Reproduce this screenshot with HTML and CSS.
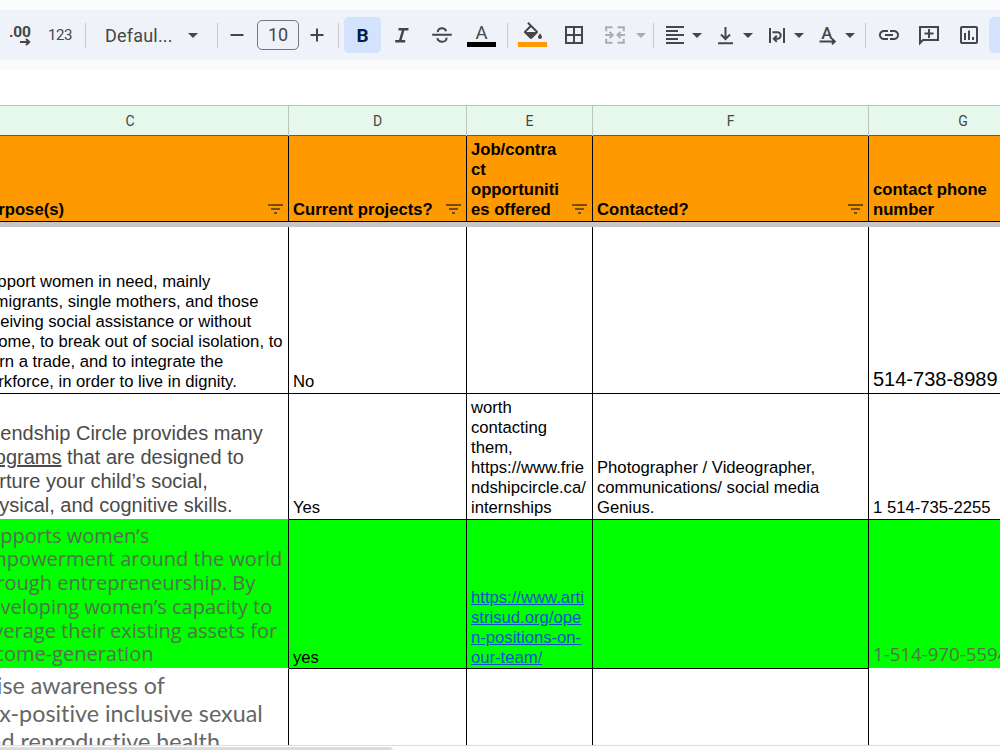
FILE: index.html
```html
<!DOCTYPE html>
<html lang="en">
<head>
    <meta charset="UTF-8">
    <meta name="viewport" content="width=device-width, initial-scale=1.0">
    <title>Organizations - Sheet</title>
    <link rel="stylesheet" href="styles.css">
</head>
<body>

    <div class="toolbar">
        <div class="tool decimals">
            <svg width="24" height="24" viewBox="0 0 24 24">
                <text class="decimal-text" x="1" y="13.5" textLength="22">.00</text>
                <path class="line" d="M12 19h9M18 16l3.2 3-3.2 3"/>
            </svg>
        </div>
        <div class="tool number-format">123</div>
        <div class="separator"></div>
        <div class="font-select"><span>Defaul...</span><i class="caret"></i></div>
        <div class="separator"></div>
        <div class="tool size-step"><svg width="24" height="24" viewBox="0 0 24 24"><path class="line" d="M5.5 12h13"/></svg></div>
        <div class="font-size">10</div>
        <div class="tool size-step"><svg width="24" height="24" viewBox="0 0 24 24"><path class="line" d="M5.5 12h13M12 5.5v13"/></svg></div>
        <div class="separator after-size"></div>
        <div class="tool bold">B</div>
        <div class="tool italic"><svg width="24" height="24" viewBox="0 0 24 24"><path class="thick" d="M8.5 6.2h10M5.2 18.3h10M13.5 6.2l-3.5 12"/></svg></div>
        <div class="tool strike">
            <svg width="24" height="24" viewBox="0 0 24 24">
                <path class="line" d="M2.2 11.8h19.6M7.8 9.2C7.6 6.6 9.5 5.3 12 5.3c2.1 0 3.6 1 4.1 2.9M7.4 15.2c.4 2.3 2.1 3.600 4.7 3.600 2.900 0 4.600-1.700 4.400-4.100"/>
            </svg>
        </div>
        <div class="tool text-color"><span>A</span><i class="swatch black"></i></div>
        <div class="separator"></div>
        <div class="tool fill-color">
            <svg width="24" height="24" viewBox="0 0 24 24">
                <path class="solid" d="M16.560 8.940L7.620 0 6.210 1.410l2.380 2.380-5.150 5.150c-.59.59-.59 1.540 0 2.120l5.500 5.500c.29.290.68.440 1.060.44s.77-.15 1.060-.44l5.500-5.500c.59-.58.59-1.530 0-2.120zM5.210 10L10 5.210 14.790 10zM19 11.500s-2 2.170-2 3.500c0 1.100.9 2 2 2s2-.9 2-2c0-1.330-2-3.500-2-3.500z"/>
            </svg>
            <i class="swatch orange"></i>
        </div>
        <div class="tool borders"><svg width="24" height="24" viewBox="0 0 24 24"><path class="line" d="M4 4h16v16H4zM12 4v16M4 12h16"/></svg></div>
        <div class="tool merge disabled">
            <svg width="24" height="24" viewBox="0 0 24 24">
                <path class="line" d="M9.500 4.200H3.200v4M14.500 4.200h6.300v4M9.500 19.800H3.200v-4M14.500 19.800h6.300v-4M2.200 12h7M22 12h-7M6.600 8.900L9.700 12l-3.100 3.100M17.600 8.900L14.500 12l3.100 3.100"/>
            </svg>
        </div>
        <div class="drop disabled"><i class="caret"></i></div>
        <div class="separator"></div>
        <div class="tool align"><svg width="24" height="24" viewBox="0 0 24 24"><path class="line" d="M3 4h18M3 8h12M3 12h18M3 16h12M3 20h18"/></svg></div>
        <div class="drop"><i class="caret"></i></div>
        <div class="tool with-drop"><svg width="24" height="24" viewBox="0 0 24 24"><path class="line" d="M12.500 4v11.500M8 11.500l4.500 4.500 4.500-4.500M5 20.300h15"/></svg></div>
        <div class="drop"><i class="caret"></i></div>
        <div class="tool with-drop"><svg width="24" height="24" viewBox="0 0 24 24"><path class="line" d="M6 5v15M20 5v15M8.500 9.300h5a3.200 3.200 0 0 1 0 6.400h-3.500M12.800 12.700l-3 3 3 3"/></svg></div>
        <div class="drop"><i class="caret"></i></div>
        <div class="tool with-drop">
            <svg width="24" height="24" viewBox="0 0 24 24">
                <text class="rotate-text" x="12" y="15.500" text-anchor="middle">A</text>
                <path class="line" d="M4.500 18.500h15M17 15.700l2.800 2.800-2.800 2.800"/>
            </svg>
        </div>
        <div class="drop"><i class="caret"></i></div>
        <div class="separator before-link"></div>
        <div class="tool link">
            <svg width="24" height="24" viewBox="0 0 24 24">
                <path class="solid" d="M3.900 12c0-1.710 1.390-3.100 3.100-3.100h4V7H7c-2.760 0-5 2.240-5 5s2.240 5 5 5h4v-1.900H7c-1.710 0-3.100-1.390-3.100-3.100zM8 13h8v-2H8v2zm9-6h-4v1.900h4c1.710 0 3.100 1.390 3.100 3.100s-1.390 3.100-3.100 3.100h-4V17h4c2.760 0 5-2.240 5-5s-2.240-5-5-5z"/>
            </svg>
        </div>
        <div class="tool comment"><svg width="24" height="24" viewBox="0 0 24 24"><path class="line" d="M3 20V4h18v13H6zM12 6v9M7.500 10.500h9"/></svg></div>
        <div class="tool chart"><svg width="24" height="24" viewBox="0 0 24 24"><rect class="line" x="4" y="4" width="16" height="16" rx="1"/><path class="line" d="M8 10v7M12 7.500V17M16 14v3"/></svg></div>
        <div class="tool filter-on"></div>
    </div>

    <div class="sheet">
        <div class="row letters">
            <div class="letter">C</div>
            <div class="letter">D</div>
            <div class="letter">E</div>
            <div class="letter">F</div>
            <div class="letter">G</div>
        </div>

        <div class="row titles">
            <div class="cell">Purpose(s)<svg class="filter" width="15" height="10"><path d="M0 1h15M3 5h9M6 9h3"/></svg></div>
            <div class="cell">Current projects?<svg class="filter" width="15" height="10"><path d="M0 1h15M3 5h9M6 9h3"/></svg></div>
            <div class="cell">Job/contra<br>ct<br>opportuniti<br>es offered<svg class="filter" width="15" height="10"><path d="M0 1h15M3 5h9M6 9h3"/></svg></div>
            <div class="cell">Contacted?<svg class="filter" width="15" height="10"><path d="M0 1h15M3 5h9M6 9h3"/></svg></div>
            <div class="cell">contact phone<br>number</div>
        </div>
        <div class="freeze-bar"></div>

        <div class="row row-support">
            <div class="cell">Support women in need, mainly<br>immigrants, single mothers, and those<br>receiving social assistance or without<br>income, to break out of social isolation, to<br>learn a trade, and to integrate the<br>workforce, in order to live in dignity.</div>
            <div class="cell">No</div>
            <div class="cell"></div>
            <div class="cell"></div>
            <div class="cell large">514-738-8989</div>
        </div>

        <div class="row row-friendship">
            <div class="cell large grey green-line">Friendship Circle provides many<br><u>programs</u> that are designed to<br>nurture your child’s social,<br>physical, and cognitive skills.</div>
            <div class="cell">Yes</div>
            <div class="cell">worth<br>contacting<br>them,<br>https://www.frie<br>ndshipcircle.ca/<br>internships</div>
            <div class="cell">Photographer / Videographer,<br>communications/ social media<br>Genius.</div>
            <div class="cell">1 514-735-2255</div>
        </div>

        <div class="row row-artistri">
            <div class="cell open-sans white-line">Supports women’s<br>empowerment around the world<br>through entrepreneurship. By<br>developing women’s capacity to<br>leverage their existing assets for<br>income-generation</div>
            <div class="cell">yes</div>
            <div class="cell"><a href="#">https://www.arti<br>strisud.org/ope<br>n-positions-on-<br>our-team/</a></div>
            <div class="cell"></div>
            <div class="cell open-sans phone white-line">1-514-970-5594</div>
        </div>

        <div class="row row-awareness">
            <div class="cell lato">raise awareness of<br>sex-positive inclusive sexual<br>and reproductive health</div>
            <div class="cell"></div>
            <div class="cell"></div>
            <div class="cell"></div>
            <div class="cell"></div>
        </div>
    </div>

    <div class="scrollbar"><div class="thumb"></div></div>

</body>
</html>
```
FILE: styles.css
```css
* {
    box-sizing: border-box;
}

body {
    margin: 0;
    width: 1000px;
    height: 750px;
    overflow: hidden;
    background: #ffffff;
    color: #000000;
    font-family: "Liberation Sans", Arial, sans-serif;
}

/* toolbar */
.toolbar {
    display: flex;
    align-items: center;
    height: 70px;
    background: #eff2f9;
    border-top: 10px solid #f9fbfd;
    border-bottom: 10px solid #f9fbfd;
    overflow: hidden;
    font-family: Roboto, sans-serif;
    color: #444746;
}

.tool {
    position: relative;
    display: flex;
    flex: none;
    align-items: center;
    justify-content: center;
    width: 40px;
    height: 36px;
}

.separator {
    flex: none;
    width: 1px;
    height: 25px;
    margin: 0 5px;
    background: #c7c9cc;
}

.line {
    fill: none;
    stroke: #444746;
    stroke-width: 2;
}

.thick {
    fill: none;
    stroke: #444746;
    stroke-width: 2.5;
}

.solid {
    fill: #444746;
}

.decimal-text {
    font-size: 15.5px;
    font-weight: 700;
    fill: #444746;
}

.rotate-text {
    font-size: 17px;
    font-weight: 500;
    fill: #444746;
}

.number-format {
    font-size: 15px;
    letter-spacing: -0.5px;
}

.font-select {
    display: flex;
    flex: none;
    align-items: center;
    justify-content: space-between;
    width: 121px;
    padding: 0 14px;
    font-size: 18px;
    letter-spacing: 0.2px;
}

.caret {
    border: 5px solid transparent;
    border-top-color: #444746;
    border-bottom: 0;
}

.drop {
    display: flex;
    flex: none;
    justify-content: center;
    width: 13px;
    padding-right: 2px;
}

.disabled {
    opacity: 0.4;
}

.size-step {
    width: 28px;
}

.font-size {
    flex: none;
    width: 42px;
    height: 30px;
    margin: 0 4px 0 6px;
    border: 1px solid #747775;
    border-radius: 5px;
    font-size: 18px;
    line-height: 28px;
    text-align: center;
}

.after-size {
    margin-left: 7px;
}

.bold {
    width: 37px;
    border-radius: 5px;
    background: #d3e3fd;
    color: #041e49;
    font-size: 19px;
    font-weight: 700;
}

.italic {
    width: 38px;
    margin-left: 2px;
}

.strike {
    width: 41px;
}

.text-color span {
    margin: -4px 1px 0 0;
    font-size: 18.5px;
}

.swatch {
    position: absolute;
    bottom: 6px;
    left: 5px;
    width: 29px;
    height: 5px;
}

.black {
    background: #000000;
}

.orange {
    background: #ff9900;
}

.fill-color {
    width: 39px;
}

.fill-color svg {
    margin-top: -3px;
}

.borders {
    width: 43px;
}

.align {
    width: 32px;
}

.with-drop {
    width: 34px;
    margin-left: 4px;
}

.before-link {
    margin-left: 8px;
}

.link {
    width: 36px;
}

.comment {
    width: 43px;
}

.chart {
    width: 37px;
}

.filter-on {
    margin-left: 2px;
    border-radius: 5px;
    background: #d3e3fd;
}

/* grid */
.sheet {
    height: 641px;
    margin: 35px 0 0 -28px;
    overflow: hidden;
    border-bottom: 1px solid #dadce0;
}

.row {
    display: grid;
    grid-template-columns: 317px 178px 126px 276px 189px;
}

.letters {
    height: 31px;
    border-top: 1px solid #b7bfba;
    border-bottom: 1px solid #2d7a3e;
    background: #e6f7eb;
}

.letter {
    border-right: 1px solid #bcc4bf;
    color: #444746;
    font-family: Roboto, sans-serif;
    font-size: 14px;
    line-height: 30px;
    text-align: center;
}

.cell {
    position: relative;
    display: flow-root;
    align-content: end;
    padding: 0 0 1px 4px;
    border-right: 1px solid #000000;
    border-bottom: 1px solid #000000;
    font-size: 16.67px;
    line-height: 20px;
    white-space: nowrap;
    overflow: hidden;
}

.cell:first-child {
    padding-left: 5px;
}

.titles {
    height: 86px;
    background: #ff9900;
    font-weight: 700;
}

.filter {
    position: absolute;
    right: 5px;
    bottom: 7px;
    fill: none;
    stroke: #4a3410;
    stroke-width: 1.5;
}

.freeze-bar {
    height: 5px;
    background: #c4c6c8;
}

.row-support {
    height: 167px;
}

.row-friendship {
    height: 126px;
}

.row-artistri {
    height: 149px;
    background: #00ff00;
}

.row-artistri .cell {
    padding-bottom: 0;
}

.row-awareness {
    height: 84px;
}

.cell.large {
    padding-bottom: 2px;
    font-size: 20px;
    line-height: 24px;
}

.grey {
    color: #4a4a4a;
}

.green-line {
    border-bottom-color: #00ff00;
}

.white-line {
    border-bottom-color: #ffffff;
}

.row-artistri .open-sans {
    padding-bottom: 2px;
    color: #55704f;
    font-family: "Open Sans", sans-serif;
    font-size: 20px;
    line-height: 23.7px;
}

.row-artistri .phone {
    font-size: 18.67px;
}

.lato {
    align-content: start;
    padding-top: 2px;
    color: #666666;
    font-family: Lato, sans-serif;
    font-size: 23.3px;
    font-variant-ligatures: none;
    line-height: 28px;
}

.cell a {
    color: #1155cc;
    text-decoration: underline;
}

.scrollbar {
    height: 4px;
    padding-top: 1px;
}

.thumb {
    width: 393px;
    height: 8px;
    border-radius: 0 8px 8px 0;
    background: #dadce0;
}
```
